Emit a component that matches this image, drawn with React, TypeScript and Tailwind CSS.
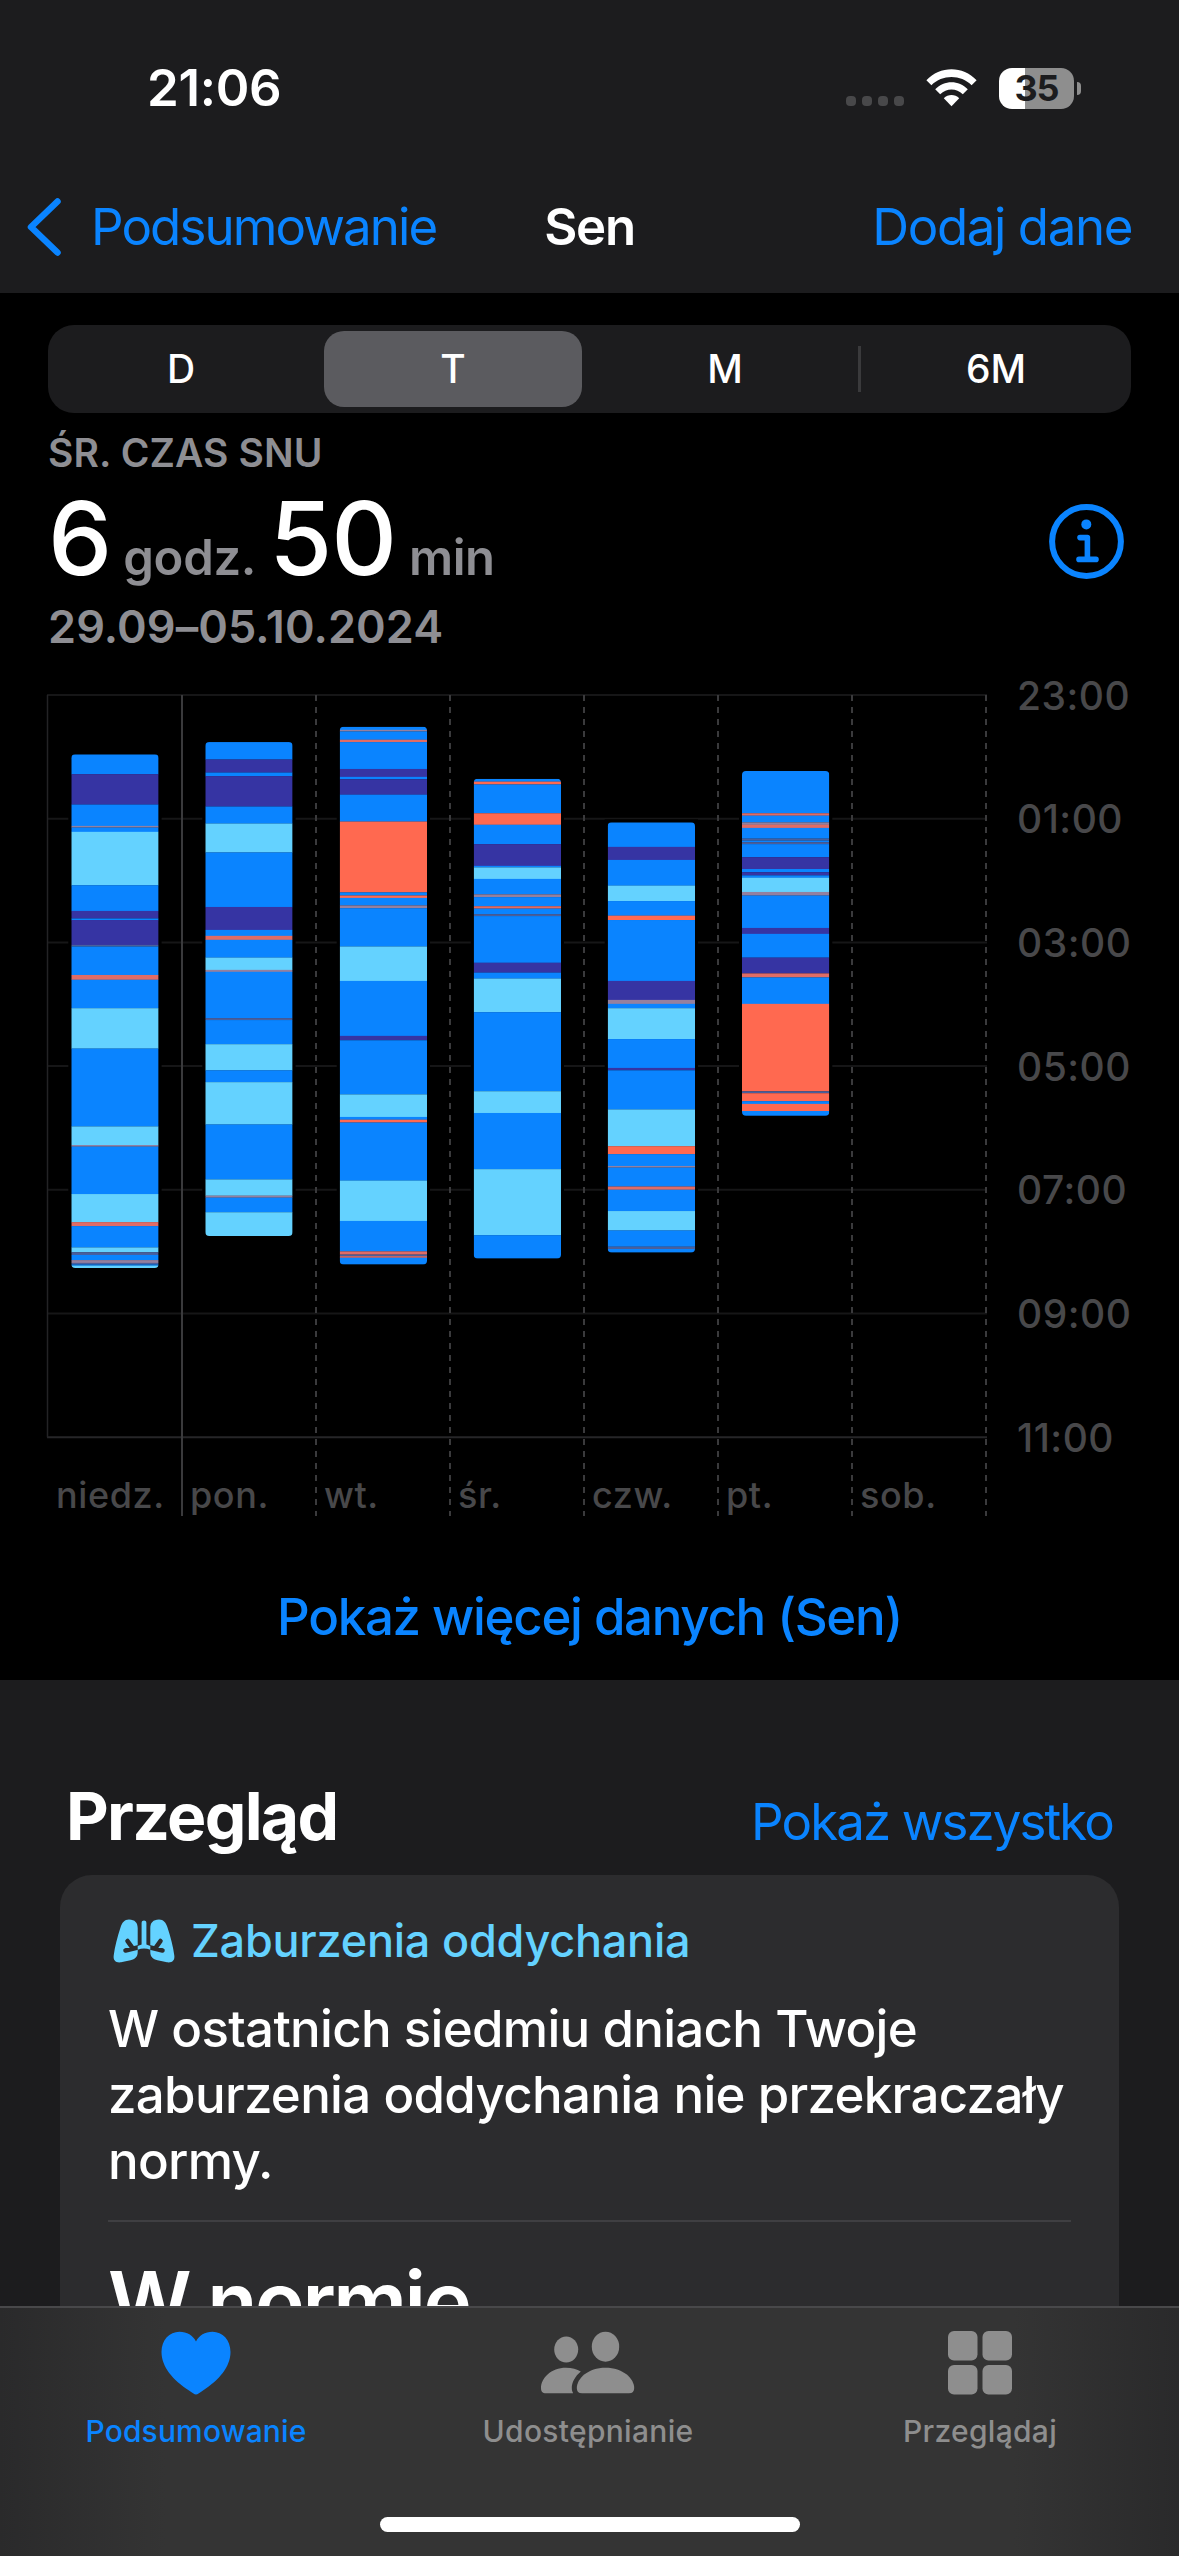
import React, { useState } from "react";

type Stage = "core" | "deep" | "rem" | "awake" | "soft" | "mix" | "dim";

interface Night {
  x: number;
  start: number;
  stages: [Stage, number][];
}

const stageColor: Record<Stage, string> = {
  core: "#0a84ff",
  deep: "#3634a3",
  rem: "#64d2ff",
  awake: "#ff6950",
  soft: "#e06c66",
  mix: "#94809f",
  dim: "#4a5f9c",
};

// every value is the end of a stage, counted in chart ticks
const nights: Night[] = [
  {
    x: 71.3,
    start: 188,
    stages: [
      ["core", 238], ["deep", 315], ["core", 369], ["mix", 373], ["core", 384],
      ["rem", 519], ["core", 584], ["deep", 603], ["core", 607], ["deep", 670],
      ["dim", 674], ["core", 746], ["soft", 758], ["core", 830], ["rem", 932],
      ["core", 1129], ["rem", 1176], ["mix", 1180], ["core", 1300], ["rem", 1371],
      ["soft", 1381], ["core", 1435], ["rem", 1447], ["dim", 1454], ["core", 1467],
      ["mix", 1474], ["dim", 1478], ["core", 1481], ["rem", 1487],
    ],
  },
  {
    x: 205.3,
    start: 157,
    stages: [
      ["core", 201], ["deep", 234], ["core", 243], ["deep", 320], ["core", 363],
      ["rem", 436], ["core", 574], ["deep", 632], ["core", 647], ["soft", 657],
      ["core", 702], ["rem", 733], ["mix", 738], ["core", 855], ["dim", 860],
      ["core", 921], ["rem", 987], ["core", 1017], ["rem", 1124], ["core", 1263],
      ["rem", 1304], ["mix", 1309], ["core", 1346], ["rem", 1406],
    ],
  },
  {
    x: 339.7,
    start: 118,
    stages: [
      ["core", 126], ["mix", 130], ["core", 151], ["soft", 157], ["core", 225],
      ["deep", 245], ["core", 251], ["deep", 290], ["core", 358], ["awake", 537],
      ["core", 545], ["awake", 551], ["core", 570], ["mix", 577], ["core", 674],
      ["rem", 761], ["core", 900], ["deep", 911], ["core", 1048], ["rem", 1105],
      ["core", 1112], ["awake", 1119], ["core", 1266], ["rem", 1368], ["core", 1445],
      ["soft", 1453], ["dim", 1457], ["soft", 1461], ["core", 1478],
    ],
  },
  {
    x: 473.7,
    start: 250,
    stages: [
      ["core", 257], ["awake", 264], ["core", 337], ["awake", 366], ["core", 415],
      ["deep", 470], ["core", 474], ["rem", 503], ["core", 542], ["mix", 549],
      ["core", 572], ["soft", 578], ["core", 592], ["dim", 597], ["core", 715],
      ["deep", 740], ["core", 755], ["rem", 840], ["core", 1040], ["rem", 1095],
      ["core", 1237], ["rem", 1404], ["core", 1463],
    ],
  },
  {
    x: 607.7,
    start: 360,
    stages: [
      ["core", 422], ["deep", 455], ["core", 520], ["rem", 559], ["core", 596],
      ["awake", 607], ["core", 761], ["deep", 809], ["mix", 819], ["core", 830],
      ["rem", 908], ["core", 981], ["deep", 987], ["core", 1086], ["rem", 1179],
      ["awake", 1199], ["core", 1229], ["mix", 1233], ["core", 1281], ["soft", 1289],
      ["core", 1343], ["rem", 1392], ["core", 1433], ["dim", 1439], ["core", 1448],
    ],
  },
  {
    x: 742,
    start: 230,
    stages: [
      ["core", 337], ["soft", 343], ["core", 360], ["mix", 366], ["soft", 374],
      ["core", 401], ["dim", 406], ["core", 410], ["dim", 415], ["core", 448],
      ["deep", 478], ["core", 486], ["deep", 494], ["core", 500], ["rem", 536],
      ["mix", 545], ["core", 627], ["deep", 642], ["core", 702], ["deep", 742],
      ["soft", 752], ["core", 819], ["awake", 1040], ["dim", 1045], ["awake", 1065],
      ["core", 1072], ["awake", 1090], ["core", 1102],
    ],
  },
];

const hours = ["23:00", "01:00", "03:00", "05:00", "07:00", "09:00", "11:00"];
const days = ["niedz.", "pon.", "wt.", "śr.", "czw.", "pt.", "sob."];
const ranges = ["D", "T", "M", "6M"];

const TOP = 695;
const ROW = 123.7;
const COL = 134;
const tickY = (t: number) => 680 + t / 2.529;

const SleepChart = () => (
  <svg width="1179" height="867" viewBox="0 669 1179 867" className="block">
    {hours.map((h, i) => (
      <g key={h}>
        <line
          x1="47"
          x2="987"
          y1={TOP + i * ROW}
          y2={TOP + i * ROW}
          stroke={i === 6 ? "#262628" : "#161617"}
          strokeWidth="2"
        />
        <text
          x="1017"
          y={TOP + i * ROW + 14.6}
          fill="#48484a"
          className="text-[39px] font-medium tracking-[0.5px]"
        >
          {h}
        </text>
      </g>
    ))}
    <line x1="47.5" x2="47.5" y1={TOP} y2={TOP + 6 * ROW} stroke="#232325" strokeWidth="1.5" />
    {days.map((d, i) => (
      <g key={d}>
        <line
          x1={182 + i * COL}
          x2={182 + i * COL}
          y1="695"
          y2="1516"
          stroke="#3a3a3c"
          strokeWidth="2"
          strokeDasharray={i === 0 ? undefined : "6 6"}
        />
        <text
          x={56 + i * COL}
          y="1508"
          fill="#48484a"
          className="text-[36px] font-medium tracking-[0.6px]"
        >
          {d}
        </text>
      </g>
    ))}
    {nights.map((n, i) => {
      const end = n.stages[n.stages.length - 1][1];
      const top = tickY(n.start);
      const height = tickY(end) - top;
      return (
        <g key={i}>
          <clipPath id={`night-${i}`}>
            <rect x={n.x} y={top} width="87.3" height={height} rx="4" />
          </clipPath>
          <rect x={n.x - 3} y={top - 3} width="93.3" height={height + 6} fill="#000" />
          <g clipPath={`url(#night-${i})`}>
            {n.stages.map(([stage, to], j) => {
              const from = j === 0 ? n.start : n.stages[j - 1][1];
              return (
                <rect
                  key={j}
                  x={n.x}
                  y={tickY(from)}
                  width="87.3"
                  height={(to - from) / 2.529 + 0.2}
                  fill={stageColor[stage]}
                />
              );
            })}
          </g>
        </g>
      );
    })}
  </svg>
);

const WifiIcon = () => (
  <svg width="51" height="38" viewBox="0 0 51 38" fill="#fff">
    <path d="M0.4 11.2C14 -3.4 37 -3.4 50.6 11.2L45.6 16.3C35 5.2 16 5.2 5.4 16.3Z" />
    <path d="M9.2 20.2C18.2 10.8 32.8 10.8 41.8 20.2L36.8 25.3C30.6 19 20.4 19 14.2 25.3Z" />
    <path d="M17.8 29.2C22 25 29 25 33.2 29.2L25.5 37.2Z" />
  </svg>
);

const InfoIcon = () => (
  <svg width="75" height="75" viewBox="0 0 75 75" fill="none" stroke="#0a84ff">
    <circle cx="37.5" cy="37.5" r="34.4" strokeWidth="6" />
    <circle cx="37.3" cy="20.4" r="5" fill="#0a84ff" stroke="none" />
    <path
      d="M31 33.6H38.4V55M30 55.4H47"
      strokeWidth="5.6"
      strokeLinecap="round"
      strokeLinejoin="round"
    />
  </svg>
);

const LungsIcon = () => (
  <svg width="62" height="44" viewBox="0 0 62 44">
    <path
      d="M16 .5C22 .5 24.7 4 24.7 9V33C24.7 38 22 40 17.5 41.3L8 43.3C3 44 0 41.5 .7 36.5C1.8 28 4.5 17.5 7.5 8.5C9 3.5 11.5 .5 16 .5Z M46 .5C40 .5 37.3 4 37.3 9V33C37.3 38 40 40 44.5 41.3L54 43.3C59 44 62 41.5 61.3 36.5C60.2 28 57.5 17.5 54.5 8.5C53 3.5 50.5 .5 46 .5Z"
      fill="#64d2ff"
    />
    <path
      d="M24.7 28.5L12.5 31.5M19.5 29L14.5 22M37.3 28.5L49.5 31.5M42.5 29L47.5 22"
      stroke="#2c2c2e"
      strokeWidth="4.6"
      strokeLinecap="round"
    />
    <path d="M28.6 4C28.6 .8 33.4 .8 33.4 4V25.5L37.3 27V30.8Q31 28.3 24.7 30.8V27L28.6 25.5Z" fill="#64d2ff" />
  </svg>
);

const HeartIcon = () => (
  <svg width="70" height="64" viewBox="0 0 70 64" fill="#0a84ff">
    <path d="M35 63.5C33.5 63.5 31 61.5 28 59.5C12 49 .5 36 .5 21C.5 9 8.5 .8 18.5 .8C26 .8 32 4.5 35 10.5C38 4.5 44 .8 51.5 .8C61.5 .8 69.5 9 69.5 21C69.5 36 58 49 42 59.5C39 61.5 36.5 63.5 35 63.5Z" />
  </svg>
);

const PeopleIcon = () => (
  <svg width="94" height="64" viewBox="0 0 94 64" fill="#8e8e8e">
    <ellipse cx="25.2" cy="18.5" rx="12" ry="13" />
    <ellipse cx="64.5" cy="15.7" rx="13.7" ry="15" />
    <path d="M5 62.3C1.5 62.3 0 60.5 0 57C0 47 10 36.7 25 36.7C31 36.7 36 38.2 39.8 40.6C34 45.5 30.8 51.5 30.8 57C30.8 59 31.2 60.8 32.2 62.3Z" />
    <path d="M41 62.3C37.5 62.3 35.8 60.5 35.8 57C35.8 47.5 47 36.7 64.5 36.7C82 36.7 93.2 47.5 93.2 57C93.2 60.5 91.5 62.3 88 62.3Z" />
  </svg>
);

const GridIcon = () => (
  <svg width="64" height="64" viewBox="0 0 64 64" fill="#8e8e8e">
    <rect x="0" y="0" width="29.5" height="29.5" rx="6" />
    <rect x="34.5" y="0" width="29.5" height="29.5" rx="6" />
    <rect x="0" y="34" width="29.5" height="29.5" rx="6" />
    <rect x="34.5" y="34" width="29.5" height="29.5" rx="6" />
  </svg>
);

const StatusBar = () => (
  <div className="flex h-[176px] items-center justify-between pr-[98px] pl-[147px]">
    <div className="text-[51px] font-semibold tracking-[-0.3px]">21:06</div>
    <div className="flex items-center">
      <div className="mt-[26px] flex gap-[6px]">
        {[0, 1, 2, 3].map((i) => (
          <div key={i} className="h-[10px] w-[10px] rounded-[4px] bg-[#48484a]"></div>
        ))}
      </div>
      <div className="ml-[22px]">
        <WifiIcon />
      </div>
      <div className="ml-[22px] flex h-[41px] w-[75px] items-center justify-center rounded-[13px] bg-[linear-gradient(90deg,#fff_26px,#8e8e8e_26px)] text-[36px] font-bold tracking-[-1px] text-[#1c1c1e]">
        35
      </div>
      <div className="ml-[3px] h-[13px] w-[4px] rounded-r-full bg-[#8e8e8e]"></div>
    </div>
  </div>
);

const App = () => {
  const [range, setRange] = useState("T");

  return (
    <div className="flex h-[2556px] w-[1179px] flex-col overflow-hidden bg-black font-['Inter','Liberation_Sans',sans-serif] text-white">
      <header className="h-[293px] bg-[#1c1c1e]">
        <StatusBar />
        <nav className="grid h-[102px] grid-cols-[1fr_auto_1fr] items-center px-[26px] text-[51px]">
          <div className="flex items-center text-[#0a84ff]">
            <svg width="36" height="58" viewBox="0 0 36 58" fill="none">
              <path d="M31.5 3.5L5 29L31.5 54.5" stroke="#0a84ff" strokeWidth="6.5" strokeLinecap="round" strokeLinejoin="round" />
            </svg>
            <span className="ml-[29px] tracking-[-1.9px]">Podsumowanie</span>
          </div>
          <div className="font-semibold tracking-[-1.3px]">Sen</div>
          <div className="pr-[21px] text-right tracking-[-1.4px] text-[#0a84ff]">Dodaj dane</div>
        </nav>
      </header>

      <main>
        <div className="mx-[48px] mt-[32px] flex h-[88px] items-center rounded-[26px] bg-[#1c1c1e]">
          {ranges.map((r, i) => (
            <button
              key={r}
              type="button"
              onClick={() => setRange(r)}
              className={`h-[76px] text-[39px] font-medium ${
                range === r
                  ? "mx-[5px] w-[258px] rounded-[20px] bg-[#5b5b5f]"
                  : "w-[271px]"
              } ${i === 0 ? "pr-[5px]" : i > 1 ? "pl-[5px]" : ""} ${
                i === 3
                  ? "relative before:absolute before:top-[15px] before:left-0 before:h-[46px] before:w-[3px] before:bg-[#3a3a3c]"
                  : ""
              }`}
            >
              {r}
            </button>
          ))}
        </div>

        <div className="flex items-center justify-between pr-[55px] pl-[48px]">
          <div className="font-semibold text-[#8e8e93]">
            <p className="text-[39px] leading-[80px] tracking-[0.1px]">ŚR. CZAS SNU</p>
            <p className="flex h-[90px] items-baseline text-[49px] leading-[90px]">
              <span className="text-[102px] font-medium text-white">6</span>
              <span className="ml-[11px] tracking-[-0.3px]">godz.</span>
              <span className="ml-[13px] text-[102px] font-medium tracking-[-1px] text-white">50</span>
              <span className="ml-[13px] tracking-[-0.5px]">min</span>
            </p>
            <p className="text-[45px] leading-[87px] tracking-[0.1px]">29.09–05.10.2024</p>
          </div>
          <InfoIcon />
        </div>

        <div className="-mt-px">
          <SleepChart />
        </div>

        <div className="h-[144px] pt-[18px] text-center text-[51px] leading-[126px] font-medium tracking-[-1.3px] text-[#0a84ff]">
          Pokaż więcej danych (Sen)
        </div>
      </main>

      <section className="h-[626px] overflow-hidden bg-[#1c1c1e]">
        <div className="flex h-[195px] items-baseline justify-between pt-[96px] pr-[66px] pl-[66px] leading-[80px]">
          <h2 className="text-[66px] font-bold tracking-[-1.7px]">Przegląd</h2>
          <span className="text-[51px] tracking-[-1.9px] text-[#0a84ff]">Pokaż wszystko</span>
        </div>
        <div className="mx-[60px] h-[600px] rounded-[32px] bg-[#2c2c2e] px-[48px] pt-[30px]">
          <div className="flex h-[72px] items-center pl-[5px] text-[45px] font-medium text-[#64d2ff]">
            <LungsIcon />
            <span className="ml-[16px] tracking-[-0.23px]">Zaburzenia oddychania</span>
          </div>
          <p className="mt-[19px] text-[51px] leading-[66px] font-medium tracking-[-0.7px] whitespace-nowrap">
            W ostatnich siedmiu dniach Twoje
            <br />
            zaburzenia oddychania nie przekraczały
            <br />
            normy.
          </p>
          <div className="mt-[26px] h-[2px] bg-[#3f3f42]"></div>
          <p className="mt-[30px] text-[82px] leading-[100px] font-semibold tracking-[-2.5px]">W normie</p>
        </div>
      </section>

      <footer className="flex h-[250px] flex-col justify-between border-t-2 border-[#48484a] bg-[linear-gradient(90deg,#2a2a2b,#343434_14%,#343434_86%,#2a2a2b)] pb-[24px]">
        <div className="grid grid-cols-3 pt-[22px] pr-[3px] text-center text-[30px] leading-[40px] font-medium tracking-[0.3px] text-[#8e8e8e]">
          <div className="flex flex-col items-center text-[#0a84ff]">
            <div className="flex h-[66px] items-center"><HeartIcon /></div>
            <span className="mt-[15px] tracking-[0.15px]">Podsumowanie</span>
          </div>
          <div className="flex flex-col items-center">
            <div className="flex h-[66px] items-center"><PeopleIcon /></div>
            <span className="mt-[15px]">Udostępnianie</span>
          </div>
          <div className="flex flex-col items-center">
            <div className="flex h-[66px] items-center"><GridIcon /></div>
            <span className="mt-[15px]">Przeglądaj</span>
          </div>
        </div>
        <div className="mx-auto h-[15px] w-[420px] rounded-full bg-white"></div>
      </footer>
    </div>
  );
};

export default App;
